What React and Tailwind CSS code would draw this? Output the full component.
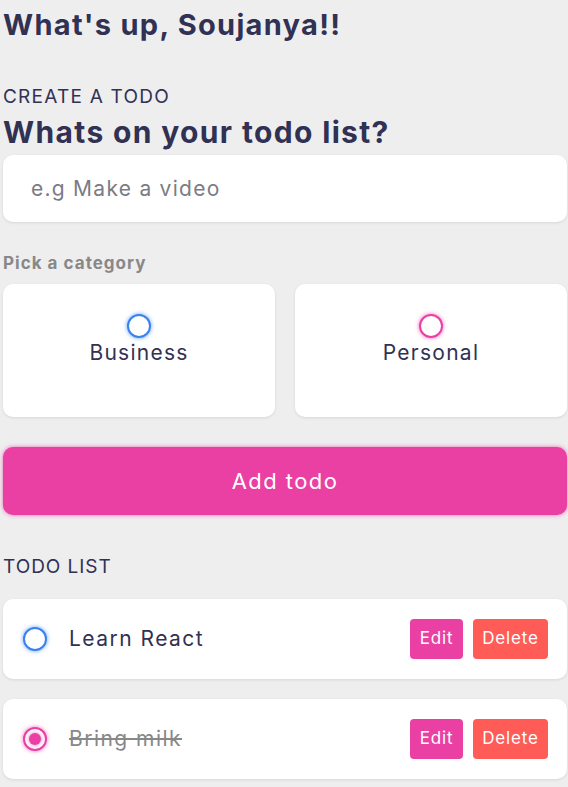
import React from "react";

function Bubble({ color, checked }) {
  const cls =
    color === "business"
      ? "border-[#3a82ee] shadow-[0_0_4px_rgba(58,130,238,0.75)]"
      : "border-[#ea40a4] shadow-[0_0_4px_rgba(234,64,164,0.75)]";
  return (
    <span className={`flex h-[24px] w-[24px] shrink-0 items-center justify-center rounded-full border-2 bg-white ${cls}`}>
      {checked && <span className="block h-[12px] w-[12px] rounded-full bg-[#ea40a4] shadow-[0_0_4px_rgba(234,64,164,0.75)]" />}
    </span>
  );
}

function TodoItem({ text, color, done }) {
  return (
    <div className="flex h-[80px] items-center rounded-[10px] bg-white pl-[20px] pr-[19px] shadow-[0_1px_3px_rgba(0,0,0,0.1)]">
      <Bubble color={color} checked={done} />
      <div
        className={`ml-[22px] flex-1 text-[21px] leading-[28px] tracking-[0.07em] ${
          done ? "text-[#888888] line-through decoration-[2px]" : "text-[#313154]"
        }`}
      >
        {text}
      </div>
      <div className="flex items-center gap-[10px]">
        <button className="flex h-[40px] w-[53px] items-center justify-center rounded-[4px] bg-[#ea40a4] text-[17px] tracking-[0.05em] text-white">
          Edit
        </button>
        <button className="flex h-[40px] w-[75px] items-center justify-center rounded-[4px] bg-[#ff5b57] text-[17px] tracking-[0.05em] text-white">
          Delete
        </button>
      </div>
    </div>
  );
}

export default function App() {
  return (
    <div
      className="min-h-screen bg-[#eeeeee] pl-[3px] pr-[1px] text-[#313154]"
      style={{ fontFamily: "Inter, 'Open Sans', sans-serif" }}
    >
      <h1 className="pt-[6px] text-[29px] font-bold leading-[37px] tracking-[0.045em]">What's up, Soujanya!!</h1>

      <h3 className="mt-[43px] text-[19px] leading-[21px] tracking-[0.065em]">CREATE A TODO</h3>
      <h2 className="mt-[10px] text-[30px] font-bold leading-[30px] tracking-[0.045em]">Whats on your todo list?</h2>

      <div className="mt-[8px] flex h-[67px] items-center rounded-[10px] bg-white px-[28px] text-[21px] tracking-[0.06em] text-[#7b7b86] shadow-[0_1px_3px_rgba(0,0,0,0.1)]">
        e.g Make a video
      </div>

      <h4 className="mt-[31px] text-[17px] font-bold leading-[21px] tracking-[0.06em] text-[#888888]">Pick a category</h4>

      <div className="mt-[10px] grid grid-cols-2 gap-[20px]">
        <div className="flex h-[133px] flex-col items-center rounded-[10px] bg-white pt-[30px] shadow-[0_1px_3px_rgba(0,0,0,0.1)]">
          <Bubble color="business" />
          <div className="mt-[3px] text-[21px] leading-[24px] tracking-[0.06em]">Business</div>
        </div>
        <div className="flex h-[133px] flex-col items-center rounded-[10px] bg-white pt-[30px] shadow-[0_1px_3px_rgba(0,0,0,0.1)]">
          <Bubble color="personal" />
          <div className="mt-[3px] text-[21px] leading-[24px] tracking-[0.06em]">Personal</div>
        </div>
      </div>

      <button className="mt-[30px] flex h-[68px] w-full items-center justify-center rounded-[10px] bg-[#ea40a4] text-[22px] tracking-[0.065em] text-white shadow-[0_0_4px_rgba(234,64,164,0.75)]">
        Add todo
      </button>

      <h3 className="mt-[41px] text-[19px] leading-[21px] tracking-[0.05em]">TODO LIST</h3>

      <div className="mt-[22px] flex flex-col gap-[20px] pb-[8px]">
        <TodoItem text="Learn React" color="business" />
        <TodoItem text="Bring milk" color="personal" done />
      </div>
    </div>
  );
}
